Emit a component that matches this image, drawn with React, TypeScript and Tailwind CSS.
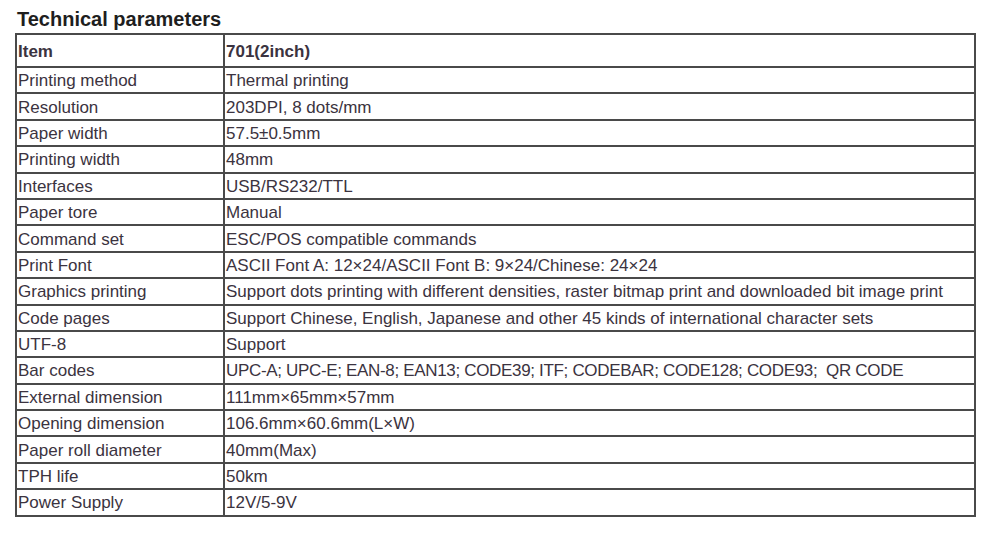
const rows: [string, string][] = [
  ["Printing method", "Thermal printing"],
  ["Resolution", "203DPI, 8 dots/mm"],
  ["Paper width", "57.5±0.5mm"],
  ["Printing width", "48mm"],
  ["Interfaces", "USB/RS232/TTL"],
  ["Paper tore", "Manual"],
  ["Command set", "ESC/POS compatible commands"],
  ["Print Font", "ASCII Font A: 12×24/ASCII Font B: 9×24/Chinese: 24×24"],
  [
    "Graphics printing",
    "Support dots printing with different densities, raster bitmap print and downloaded bit image print",
  ],
  [
    "Code pages",
    "Support Chinese, English, Japanese and other 45 kinds of international character sets",
  ],
  ["UTF-8", "Support"],
  [
    "Bar codes",
    "UPC-A; UPC-E; EAN-8; EAN13; CODE39; ITF; CODEBAR; CODE128; CODE93;\u00a0 QR CODE",
  ],
  ["External dimension", "111mm×65mm×57mm"],
  ["Opening dimension", "106.6mm×60.6mm(L×W)"],
  ["Paper roll diameter", "40mm(Max)"],
  ["TPH life", "50km"],
  ["Power Supply", "12V/5-9V"],
];

export default function App() {
  return (
    <div className="h-[541px] w-[1000px] bg-white pl-[15px] pt-[6px] font-['Liberation_Sans',Arial,sans-serif] text-[#3b3340]">
      <h2 className="pl-[2px] text-[20px] font-bold leading-[27px] text-[#1e1e1e]">
        Technical parameters
      </h2>
      <table className="w-[961px] border-collapse border-2 border-[#4a4a4a] text-[17px]">
        <tbody>
          <tr className="h-[33px] font-bold">
            <td className="w-[208px] border-2 border-[#4a4a4a] px-[1px] pt-[1px] align-middle leading-none">
              Item
            </td>
            <td className="border-2 border-[#4a4a4a] px-[1px] pt-[1px] align-middle leading-none">
              701(2inch)
            </td>
          </tr>
          {rows.map(([k, v]) => (
            <tr key={k} className="h-[26.4px]">
              <td className="border-2 border-[#4a4a4a] px-[1px] pt-[1px] align-middle leading-none">
                {k}
              </td>
              <td
                className={
                  k === "Bar codes"
                    ? "whitespace-nowrap border-2 border-[#4a4a4a] px-[1px] pt-[1px] align-middle leading-none tracking-[-0.33px]"
                    : "whitespace-nowrap border-2 border-[#4a4a4a] px-[1px] pt-[1px] align-middle leading-none"
                }
              >
                {v}
              </td>
            </tr>
          ))}
        </tbody>
      </table>
    </div>
  );
}
